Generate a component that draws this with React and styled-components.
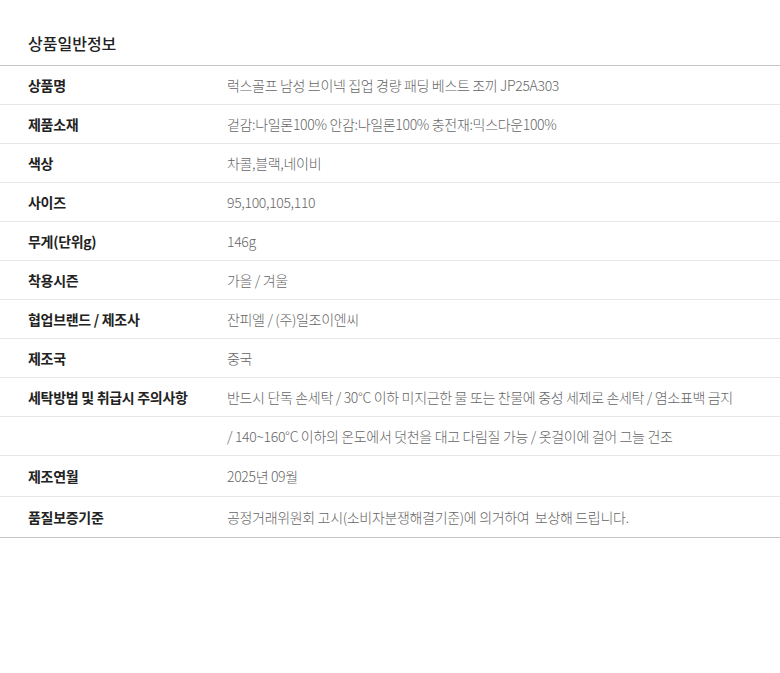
import React from 'react';
import styled, { createGlobalStyle } from 'styled-components';

const GlobalStyle = createGlobalStyle`
  body {
    margin: 0;
    background: #fff;
    font-family: "Noto Sans CJK KR", "Noto Sans", sans-serif;
  }
`;

const ROWS = [
  ['상품명', '럭스골프 남성 브이넥 집업 경량 패딩 베스트 조끼 JP25A303'],
  ['제품소재', '겉감:나일론100% 안감:나일론100% 충전재:믹스다운100%'],
  ['색상', '차콜,블랙,네이비'],
  ['사이즈', '95,100,105,110'],
  ['무게(단위g)', '146g'],
  ['착용시즌', '가을 / 겨울'],
  ['협업브랜드 / 제조사', '잔피엘 / (주)일조이엔씨'],
  ['제조국', '중국'],
  ['세탁방법 및 취급시 주의사항', '반드시 단독 손세탁 / 30°C 이하 미지근한 물 또는 찬물에 중성 세제로 손세탁 / 염소표백 금지'],
  ['', '/ 140~160°C 이하의 온도에서 덧천을 대고 다림질 가능 / 옷걸이에 걸어 그늘 건조'],
  ['제조연월', '2025년 09월', true],
  ['품질보증기준', '공정거래위원회 고시(소비자분쟁해결기준)에 의거하여  보상해 드립니다.', true],
];

const App = () => (
  <Wrapper>
    <GlobalStyle />
    <Title>상품일반정보</Title>
    <Table>
      {ROWS.map(([label, value, tall], i) => (
        <Row key={i} $tall={tall}>
          <Label>{label}</Label>
          <Value>{value}</Value>
        </Row>
      ))}
    </Table>
  </Wrapper>
);

export default App;

const Wrapper = styled.section`
  width: 780px;
`;

const Title = styled.h2`
  margin: 0;
  padding: 31px 28px 0;
  height: 34px;
  font-size: 16px;
  font-weight: 500;
  color: #222;
  line-height: 24px;
`;

const Table = styled.div`
  border-top: 1px solid #c4c4c4;
  border-bottom: 1px solid #c4c4c4;
`;

const Row = styled.div`
  display: flex;
  align-items: center;
  height: ${(p) => (p.$tall ? '40px' : '38px')};
  padding: 0 28px;
  & + & {
    border-top: 1px solid #e6e6e6;
  }
`;

const Label = styled.div`
  width: 199px;
  flex-shrink: 0;
  font-size: 14px;
  font-weight: 700;
  color: #222;
  letter-spacing: -0.3px;
`;

const Value = styled.div`
  font-size: 14px;
  font-weight: 300;
  color: #666;
  letter-spacing: -0.33px;
  white-space: pre;
`;
